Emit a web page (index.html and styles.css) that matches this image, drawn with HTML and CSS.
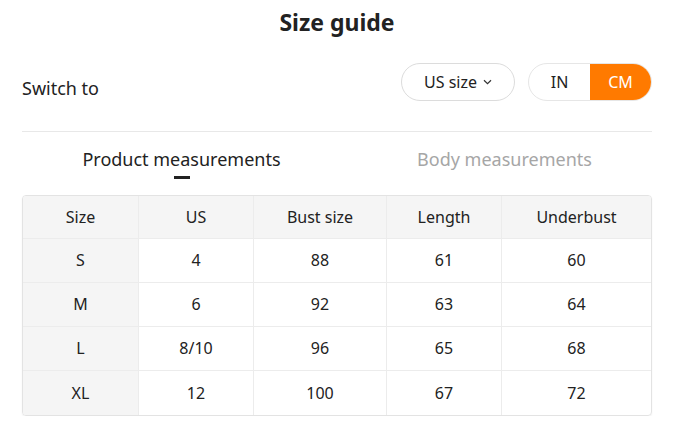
FILE: index.html
```html
<!DOCTYPE html>
<html>
<head>
<meta charset="utf-8">
<link rel="stylesheet" href="styles.css">
</head>
<body>
<div class="guide">
  <h1 class="title">Size guide</h1>
  <div class="switch-row">
    <span class="switch-label">Switch to</span>
    <div class="controls">
      <button class="select">US size <svg class="chev" width="9" height="6" viewBox="0 0 9 6"><path d="M1 1.2 L4.5 4.6 L8 1.2" fill="none" stroke="#333" stroke-width="1.2"/></svg></button>
      <div class="units">
        <span class="unit">IN</span>
        <span class="unit active">CM</span>
      </div>
    </div>
  </div>
  <div class="tabs">
    <div class="tab tab-product active">Product measurements</div>
    <div class="tab tab-body">Body measurements</div>
  </div>
  <table class="sizes">
    <colgroup>
      <col style="width:116px"><col style="width:115px"><col style="width:133px"><col style="width:115px"><col>
    </colgroup>
    <thead>
      <tr><th>Size</th><th>US</th><th>Bust size</th><th>Length</th><th>Underbust</th></tr>
    </thead>
    <tbody>
      <tr><th>S</th><td>4</td><td>88</td><td>61</td><td>60</td></tr>
      <tr><th>M</th><td>6</td><td>92</td><td>63</td><td>64</td></tr>
      <tr><th>L</th><td>8/10</td><td>96</td><td>65</td><td>68</td></tr>
      <tr><th>XL</th><td>12</td><td>100</td><td>67</td><td>72</td></tr>
    </tbody>
  </table>
</div>
</body>
</html>
```

FILE: styles.css
```css
* { box-sizing: border-box; }
html, body { margin: 0; padding: 0; background: #fff; }
body {
  font-family: "Noto Sans", "Noto Sans CJK SC", sans-serif;
  color: #222;
}
.guide {
  width: 674px;
  padding: 0 22px;
}
.title {
  margin: 0;
  padding-top: 7px;
  height: 44px;
  text-align: center;
  font-size: 23px;
  font-weight: 700;
  line-height: 30px;
  color: #222;
}
.switch-row {
  display: flex;
  justify-content: space-between;
  height: 88px;
  border-bottom: 1px solid #e8e8e8;
}
.switch-label {
  font-size: 18px;
  color: #222;
  margin-top: 32px;
}
.controls {
  display: flex;
  gap: 13px;
  margin-top: 19px;
}
.select {
  font: inherit;
  font-size: 16px;
  color: #222;
  background: #fff;
  border: 1px solid #dcdcdc;
  border-radius: 19px;
  height: 38px;
  width: 114px;
  display: flex;
  align-items: center;
  justify-content: center;
  gap: 6px;
  padding: 0;
}
.units {
  display: flex;
  height: 38px;
  width: 124px;
  border: 1px solid #e6e6e6;
  border-radius: 19px;
  overflow: hidden;
}
.unit {
  flex: 1;
  display: flex;
  align-items: center;
  justify-content: center;
  font-size: 16px;
  color: #222;
}
.unit.active {
  background: #ff7a00;
  color: #fff;
}
.tabs {
  display: flex;
  height: 63px;
}
.tab {
  text-align: center;
  font-size: 18px;
  color: #a6a6a6;
  padding-top: 15px;
  line-height: 24px;
  position: relative;
}
.tab-product { flex: 0 0 319px; }
.tab-body { flex: 1; padding-left: 16px; }
.tab.active {
  color: #222;
}
.tab.active::after {
  content: "";
  position: absolute;
  left: 50%;
  margin-left: -8px;
  top: 44px;
  width: 16px;
  height: 3px;
  background: #222;
}
.sizes {
  width: 630px;
  border-collapse: separate;
  border-spacing: 0;
  border: 1px solid #e3e3e3;
  border-radius: 4px;
  overflow: hidden;
  box-shadow: 0 1px 2px rgba(0,0,0,0.06);
  table-layout: fixed;
}
.sizes th, .sizes td {
  height: 44px;
  text-align: center;
  font-size: 16px;
  font-weight: 400;
  color: #222;
  border-right: 1px solid #ececec;
  border-bottom: 1px solid #ececec;
  padding: 0 0 1px;
}
.sizes thead th { height: 43px; background: #f5f5f5; }
.sizes tbody th { background: #f5f5f5; }
.sizes tr > :last-child { border-right: none; }
.sizes tbody tr:last-child > * { border-bottom: none; }
```
